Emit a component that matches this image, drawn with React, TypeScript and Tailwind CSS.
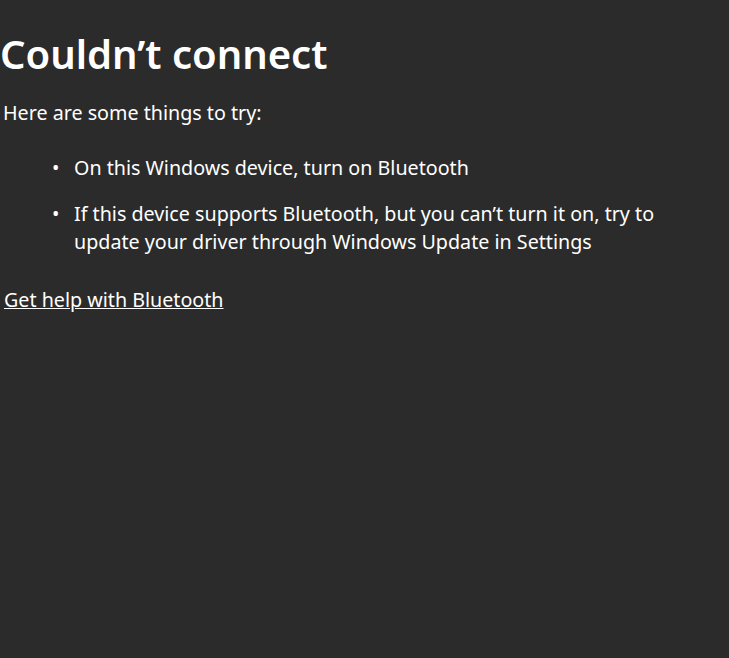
export default function App() {
  return (
    <div
      className="min-h-[658px] w-full bg-[#2b2b2b] text-white"
      style={{ fontFamily: '"Noto Sans", "Open Sans", sans-serif' }}
    >
      <h1 className="pt-[30px] text-[40px] font-semibold leading-[48px]">
        Couldn’t connect
      </h1>
      <p className="mt-[21px] pl-[3px] text-[19.7px] leading-[28px]">
        Here are some things to try:
      </p>
      <ul className="mt-[27px] flex flex-col gap-[18px] pl-[74px] pr-[40px] text-[19.7px] leading-[28px]">
        <li className="relative">
          <span className="absolute left-[-22px] top-0">•</span>
          On this Windows device, turn on Bluetooth
        </li>
        <li className="relative">
          <span className="absolute left-[-22px] top-0">•</span>
          If this device supports Bluetooth, but you can’t turn it on, try to update your driver
          through Windows Update in Settings
        </li>
      </ul>
      <a href="#" className="mt-[30px] ml-[4px] inline-block text-[19.7px] leading-[28px] underline">
        Get help with Bluetooth
      </a>
    </div>
  );
}
